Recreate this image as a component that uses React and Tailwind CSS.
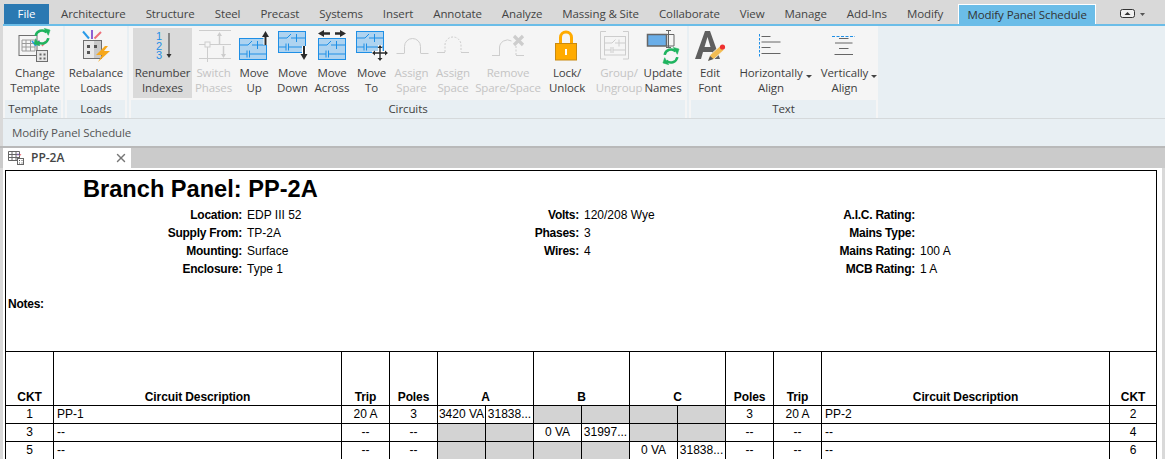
import { X } from "lucide-react";

const tabs = ["Architecture", "Structure", "Steel", "Precast", "Systems", "Insert", "Annotate", "Analyze", "Massing & Site", "Collaborate", "View", "Manage", "Add-Ins", "Modify"];

const BLUE = "#1e8fe6";
const DIS = "#cdcdcd";

function Icon({ children }) {
  return (
    <svg width="44" height="38" viewBox="0 0 44 38" fill="none" className="shrink-0">
      {children}
    </svg>
  );
}

function Refresh({ x, y }) {
  return (
    <g transform={`translate(${x} ${y}) scale(1.15)`} stroke="#1fb45f" strokeWidth="2.2" fill="none">
      <path d="M-5.5 -1a5.6 5.6 0 0 1 9.5 -3" />
      <path d="M5.5 1a5.6 5.6 0 0 1 -9.5 3" />
      <path d="M2 -7.5l5 1.5l-1.5 4.5z" fill="#1fb45f" strokeWidth="0.5" />
      <path d="M-2 7.5l-5 -1.5l1.5 -4.5z" fill="#1fb45f" strokeWidth="0.5" />
    </g>
  );
}

function Circuit({ x, y }) {
  return (
    <g transform={`translate(${x} ${y})`}>
      <rect x="0.5" y="0.5" width="27" height="21" fill="#aed3f0" stroke={BLUE} />
      <g stroke={BLUE}>
        <path d="M1 7h8l4 -4M13 7h14M18.5 3v8" />
        <path d="M1 16h7M8 12.5v7M10.5 12.5v7M10.5 16h16.5" />
      </g>
    </g>
  );
}

function Arrow({ d, head }) {
  return (
    <>
      <path d={d} stroke="#ffffff" strokeWidth="4" />
      <path d={d} stroke="#2b2b2b" strokeWidth="2" />
      <path d={head} fill="#2b2b2b" />
    </>
  );
}

const icons = {
  change: (
    <Icon>
      <rect x="6" y="7.5" width="18" height="20" fill="#f5f5f5" stroke="#6e6e6e" />
      <path d="M9 12h13v11H9zM9 15.500h13M9 19h13M13 12v11M17.500 12v11" stroke="#9a9a9a" />
      <path d="M19 13l4 5" stroke="#2a9be8" strokeWidth="1.600" />
      <path d="M26 12.500v5" stroke="#8d5fd3" strokeWidth="1.600" />
      <path d="M33 13l-4 5" stroke="#ee6f79" strokeWidth="1.600" />
      <Refresh x={29} y={9} />
      <rect x="23.500" y="22.500" width="11" height="11" fill="#e6e6e6" stroke="#6e6e6e" />
      <path d="M26.500 25.500h2v2h-2zM30.500 25.500h2v2h-2zM26.500 29.500h2v2h-2zM30.500 29.500h2v2h-2z" fill="#666666" />
    </Icon>
  ),
  rebalance: (
    <Icon>
      <path d="M9 3.500l6 7" stroke="#2a9be8" strokeWidth="2" />
      <path d="M18 2v9" stroke="#8d5fd3" strokeWidth="2" />
      <path d="M27 4l-6.500 6.500" stroke="#ee6f79" strokeWidth="2" />
      <rect x="9.500" y="12.500" width="18" height="18" fill="#e8e8e8" stroke="#6e6e6e" />
      <rect x="20" y="13" width="7" height="17" fill="#c9c9c9" />
      <path d="M13 17h3v3h-3zM13 23h3v3h-3zM20 17h3v3h-3z" fill="#555555" />
      <path d="M31 18l-9 9h6l-4 7l12 -11h-6l4 -5z" fill="#f7a81b" />
    </Icon>
  ),
  renumber: (
    <Icon>
      <text textAnchor="middle" fontSize="11" fill={BLUE} fontFamily="'Liberation Sans', sans-serif">
        <tspan x="18" y="12">1</tspan>
        <tspan x="18" y="21.500">2</tspan>
        <tspan x="18" y="31">3</tspan>
      </text>
      <path d="M28 5v22" stroke="#333333" />
      <path d="M25.500 26h5l-2.500 4z" fill="#333333" />
    </Icon>
  ),
  switch: (
    <Icon>
      <path d="M7 2.500h32M7 16.500h6M18 16.500h21M7 30.500h32M15.500 19v15" stroke={DIS} />
      <rect x="13" y="14" width="5" height="5" stroke={DIS} fill="#f5f5f5" />
      <path d="M27.500 6v10" stroke={DIS} strokeWidth="1.500" />
      <path d="M25 8l2.500 -4l2.500 4z" fill={DIS} />
      <path d="M31.500 18v10" stroke={DIS} strokeWidth="1.500" />
      <path d="M29 26l2.500 4l2.500 -4z" fill={DIS} />
    </Icon>
  ),
  up: (
    <Icon>
      <Circuit x={7} y={10} />
      <Arrow d="M33.500 8v9" head="M30 9l3.500 -6l3.500 6z" />
    </Icon>
  ),
  down: (
    <Icon>
      <Circuit x={7} y={3} />
      <Arrow d="M33 18v9" head="M29.500 26l3.500 6l3.500 -6z" />
    </Icon>
  ),
  across: (
    <Icon>
      <Circuit x={8} y={10} />
      <path d="M12 5.500h8M25 5.500h7" stroke="#2b2b2b" strokeWidth="2.400" />
      <path d="M14 2l-6 3.500l6 3.500z" fill="#2b2b2b" />
      <path d="M30 2l6 3.500l-6 3.500z" fill="#2b2b2b" />
    </Icon>
  ),
  to: (
    <Icon>
      <Circuit x={6} y={3} />
      <g transform="translate(30 25)">
        <path d="M0 -8v16M-8 0h16" stroke="#ffffff" strokeWidth="4" />
        <path d="M0 -6v12M-6 0h12" stroke="#2b2b2b" strokeWidth="1.400" />
        <path d="M-2.500 -5l2.500 -3l2.500 3zM-2.500 5l2.500 3l2.500 -3zM-5 -2.500l-3 2.500l3 2.500zM5 -2.500l3 2.500l-3 2.500z" fill="#2b2b2b" />
      </g>
    </Icon>
  ),
  spare: (
    <Icon>
      <path d="M6.500 25.500h8M30.500 25.500h8" stroke={DIS} />
      <path d="M14.500 25v-6.500a8 8 0 0 1 16 0V25" stroke={DIS} />
    </Icon>
  ),
  space: (
    <Icon>
      <path d="M6 24.500h8M30 24.500h8" stroke={DIS} />
      <path d="M14 24v-7a8 8 0 0 1 16 0V24" stroke={DIS} strokeDasharray="2 1.500" />
    </Icon>
  ),
  remove: (
    <Icon>
      <path d="M6 27.500h8M30 27.500h8" stroke={DIS} />
      <path d="M13.500 27v-7a8 8 0 0 1 12 -7" stroke={DIS} />
      <path d="M30 18v9" stroke={DIS} strokeDasharray="2 1.500" />
      <path d="M28 8l9 9M37 8l-9 9" stroke={DIS} strokeWidth="3.200" />
    </Icon>
  ),
  lock: (
    <Icon>
      <path d="M15.500 16V9.500a5.500 5.500 0 0 1 11 0V16" stroke="#ffab00" strokeWidth="3" />
      <rect x="10.500" y="15.500" width="21" height="16.500" fill="#ffab00" stroke="#c98a10" />
      <rect x="20" y="21" width="2" height="6" fill="#ffffff" />
    </Icon>
  ),
  group: (
    <Icon>
      <path d="M9 3.500H3.500v27.500H9M26 3.500h5.500v27.500H26" stroke={DIS} />
      <rect x="7.500" y="8.500" width="21" height="18.500" stroke={DIS} />
      <path d="M8 15h7l3.500 -3.500M18 15h10M22 11.500v7M8 22h6M14 19v6M16 19v6M16 22h12" stroke={DIS} />
    </Icon>
  ),
  update: (
    <Icon>
      <rect x="6.500" y="6.500" width="19" height="11.500" fill="#6aaee8" stroke="#666666" strokeWidth="1.500" />
      <path d="M25 6.500h8v11.500h-8M25 2.500h5M27.500 2.500v17M25 19.500h5" stroke="#666666" />
      <Refresh x={30} y={28} />
    </Icon>
  ),
  font: (
    <Icon>
      <path d="M7 31L17 3h5l10 28h-6l-2 -7H15l-2 7zM16.500 19h6L19.500 9z" fill="#5f5f5f" fillRule="evenodd" />
      <path d="M20 33l2 -6l10 -9l4 4l-10 9z" fill="#f2bc52" stroke="#f5f5f5" strokeWidth="0.800" />
      <path d="M20 33l2 -5l3.500 3z" fill="#555555" />
      <circle cx="34.500" cy="19" r="2.600" fill="#ee3030" />
    </Icon>
  ),
  horiz: (
    <Icon>
      <path d="M10.500 6v23" stroke={BLUE} strokeDasharray="2.500 1.500" />
      <path d="M12.500 8.500h9M12.500 14h19M12.500 19.500h9M12.500 25.500h19" stroke="#666666" />
    </Icon>
  ),
  vert: (
    <Icon>
      <path d="M9 8.500h23" stroke={BLUE} strokeDasharray="3 1.500" />
      <path d="M16 10.500h9.500M12 15h17.500M16 20.500h9.500M11.500 26.500h18.500" stroke="#666666" />
    </Icon>
  ),
};

function RibbonButton({ icon, lines, width, disabled, active, caret }) {
  return (
    <div className={`flex h-[70px] flex-col items-center ${width} ${active ? "bg-[#dadada]" : ""} ${disabled ? "text-[#c4c4c4]" : "text-[#3f3f3f]"}`}>
      <div className="h-[37px]">{icons[icon]}</div>
      {lines.map((line) => (
        <div key={line} className="relative whitespace-nowrap text-center text-[11.5px] leading-[15px] tracking-[-0.1px]">
          {line}
          {caret && line === lines[0] && (
            <span className="absolute right-[-9px] top-[10px] border-x-[3px] border-t-[3px] border-x-transparent border-t-[#444444]" />
          )}
        </div>
      ))}
    </div>
  );
}

function Panel({ title, className, children }) {
  return (
    <div className={`flex flex-col bg-[#f5f5f5] ${className}`}>
      <div className="flex h-[74px] pt-[2px]">{children}</div>
      <div className="mx-[2px] h-[18px] bg-[#e8eff3] text-center text-[11.5px] leading-[18px] tracking-[-0.1px] text-[#3f3f3f]">{title}</div>
    </div>
  );
}

const info = [
  ["Location:", "EDP III 52", "Volts:", "120/208 Wye", "A.I.C. Rating:", ""],
  ["Supply From:", "TP-2A", "Phases:", "3", "Mains Type:", ""],
  ["Mounting:", "Surface", "Wires:", "4", "Mains Rating:", "100 A"],
  ["Enclosure:", "Type 1", "", "", "MCB Rating:", "1 A"],
];

const cell = "h-[18px] overflow-hidden border-t border-r border-black p-0 pb-[1px] text-center align-middle leading-[15px] whitespace-nowrap";
const grey = `${cell} bg-[#d3d3d3]`;
const head = "border-t border-r border-black p-0 text-center align-bottom font-bold leading-[15px] tracking-[-0.1px] whitespace-nowrap";

function Row({ left, leftDesc, right, rightDesc, phase }) {
  const phases = [0, 1, 2].flatMap((p) => (p === phase.at ? [phase.va, phase.id] : [null, null]));
  return (
    <tr>
      <td className={cell}>{left}</td>
      <td className={`${cell} pl-[3px] text-left`}>{leftDesc}</td>
      <td className={cell}>{phase.trip}</td>
      <td className={cell}>{phase.poles}</td>
      {phases.map((v, i) =>
        v === null ? (
          <td key={i} className={grey} />
        ) : (
          <td key={i} className={cell}>
            {v}
          </td>
        )
      )}
      <td className={cell}>{phase.poles}</td>
      <td className={cell}>{phase.trip}</td>
      <td className={`${cell} pl-[3px] text-left`}>{rightDesc}</td>
      <td className={`${cell} border-r-0`}>{right}</td>
    </tr>
  );
}

export default function App() {
  return (
    <div className="h-[459px] w-[1165px] overflow-hidden bg-[#d9d9d9] font-['Open_Sans',sans-serif]">
      {/* tab strip */}
      <div className="flex h-[24px] items-end pl-[4px] text-[11.5px] tracking-[-0.1px] text-[#444444]">
        <div className="flex h-[20px] w-[45px] items-center justify-center bg-[#2b79b2] text-white">File</div>
        <div className="ml-[2px] flex">
          {tabs.map((t) => (
            <div key={t} className="flex h-[20px] items-center px-[10px] whitespace-nowrap">
              {t}
            </div>
          ))}
        </div>
        <div className="ml-[5px] flex h-[20px] w-[138px] items-center justify-center border-x border-t border-white bg-[#6bbde8] whitespace-nowrap text-[#333333]">
          Modify Panel Schedule
        </div>
        <svg width="26" height="10" viewBox="0 0 26 10" fill="none" className="mb-[5px] ml-[24px]">
          <rect x="0.500" y="0.500" width="14" height="8" rx="2" stroke="#333333" fill="#f0f0f0" />
          <path d="M4.500 6l3 -3l3 3z" fill="#333333" />
          <path d="M20 4h5l-2.500 3z" fill="#555555" />
        </svg>
      </div>

      {/* ribbon */}
      <div className="ml-[3px] h-[2px] bg-[#6bbde8]" />
      <div className="ml-[3px] flex h-[92px] gap-[2px] bg-[#e8eff3]">
        <Panel title="Template" className="w-[60px]">
          <div className="pl-[4px]">
            <RibbonButton icon="change" lines={["Change", "Template"]} width="w-[56px]" />
          </div>
        </Panel>
        <Panel title="Loads" className="w-[62px]">
          <RibbonButton icon="rebalance" lines={["Rebalance", "Loads"]} width="w-[62px]" />
        </Panel>
        <Panel title="Circuits" className="w-[558px]">
          <div className="flex pl-[4px]">
            <RibbonButton icon="renumber" lines={["Renumber", "Indexes"]} width="w-[59px]" active />
            <RibbonButton icon="switch" lines={["Switch", "Phases"]} width="w-[43px]" disabled />
            <RibbonButton icon="up" lines={["Move", "Up"]} width="w-[38px]" />
            <RibbonButton icon="down" lines={["Move", "Down"]} width="w-[39px]" />
            <RibbonButton icon="across" lines={["Move", "Across"]} width="w-[40px]" />
            <RibbonButton icon="to" lines={["Move", "To"]} width="w-[39px]" />
            <RibbonButton icon="spare" lines={["Assign", "Spare"]} width="w-[41px]" disabled />
            <RibbonButton icon="space" lines={["Assign", "Space"]} width="w-[42px]" disabled />
            <RibbonButton icon="remove" lines={["Remove", "Spare/Space"]} width="w-[68px]" disabled />
            <RibbonButton icon="lock" lines={["Lock/", "Unlock"]} width="w-[50px]" />
            <RibbonButton icon="group" lines={["Group/", "Ungroup"]} width="w-[54px]" disabled />
            <RibbonButton icon="update" lines={["Update", "Names"]} width="w-[34px]" />
          </div>
        </Panel>
        <Panel title="Text" className="w-[189px]">
          <RibbonButton icon="font" lines={["Edit", "Font"]} width="w-[42px]" />
          <RibbonButton icon="horiz" lines={["Horizontally", "Align"]} width="w-[80px]" caret />
          <RibbonButton icon="vert" lines={["Vertically", "Align"]} width="w-[67px]" caret />
        </Panel>
      </div>
      <div className="ml-[3px] h-[1px] bg-[#d5d9db]" />
      <div className="ml-[3px] flex h-[27px] items-center bg-[#e8eff3] pl-[9px] text-[11.5px] tracking-[-0.1px] text-[#555555]">Modify Panel Schedule</div>
      <div className="h-[2px] bg-[#b9b9b9]" />

      {/* document tab */}
      <div className="flex h-[20px] bg-[#cbcbcb] pl-[3px]">
        <div className="flex w-[128px] items-center bg-white pl-[5px] text-[12px] font-semibold text-[#444444]">
          <svg width="16" height="16" viewBox="0 0 16 16" fill="none" className="shrink-0">
            <path d="M0.500 1.500h11v9h-11zM0.500 4.500h11M0.500 7.500h11M4 1.500v9M8 1.500v9" stroke="#666666" />
            <path d="M10 3.500v2" stroke="#8d5fd3" />
            <path d="M13 4l-1.500 2" stroke="#ee6f79" />
            <rect x="9.500" y="8.500" width="6" height="6" fill="#ffffff" stroke="#666666" />
            <path d="M11 10h1v1h-1zM13.500 10h1v1h-1zM11 12.500h1v1h-1zM13.500 12.500h1v1h-1z" fill="#555555" />
          </svg>
          <span className="ml-[7px]">PP-2A</span>
          <X size={14} strokeWidth={2.4} className="ml-[50px] text-[#777777]" />
        </div>
      </div>

      {/* schedule sheet */}
      <div className="mx-[3px] h-[291px] overflow-hidden bg-white pt-[2px] pl-[2px] font-['Liberation_Sans',sans-serif] text-[12px] leading-[18px] text-black">
        <div className="w-[1152px] border-x border-t border-black">
          <div className="h-[180px]">
            <div className="h-[35px] pl-[77px] text-[23.6px] leading-[36px] font-bold">Branch Panel: PP-2A</div>
            <div className="grid grid-cols-[236px_105px_232px_105px_231px_1fr]">
              {info.map((row) =>
                row.map((text, i) =>
                  i % 2 === 0 ? (
                    <div key={`${row[0]}-${i}`} className="h-[18px] text-right font-bold tracking-[-0.25px]">
                      {text}
                    </div>
                  ) : (
                    <div key={`${row[0]}-${i}`} className="h-[18px] pl-[5px]">
                      {text}
                    </div>
                  )
                )
              )}
            </div>
            <div className="mt-[17px] pl-[2px] font-bold tracking-[-0.25px]">Notes:</div>
          </div>
          <table className="w-[1150px] table-fixed border-separate border-spacing-0">
            <colgroup>
              <col className="w-[48px]" />
              <col className="w-[288px]" />
              <col className="w-[48px]" />
              <col className="w-[48px]" />
              <col className="w-[48px]" />
              <col className="w-[48px]" />
              <col className="w-[48px]" />
              <col className="w-[48px]" />
              <col className="w-[48px]" />
              <col className="w-[48px]" />
              <col className="w-[48px]" />
              <col className="w-[48px]" />
              <col className="w-[288px]" />
              <col className="w-[46px]" />
            </colgroup>
            <thead>
              <tr className="h-[54px]">
                <th className={head}>CKT</th>
                <th className={head}>Circuit Description</th>
                <th className={head}>Trip</th>
                <th className={head}>Poles</th>
                <th className={head} colSpan={2}>A</th>
                <th className={head} colSpan={2}>B</th>
                <th className={head} colSpan={2}>C</th>
                <th className={head}>Poles</th>
                <th className={head}>Trip</th>
                <th className={head}>Circuit Description</th>
                <th className={`${head} border-r-0`}>CKT</th>
              </tr>
            </thead>
            <tbody>
              <Row left="1" leftDesc="PP-1" right="2" rightDesc="PP-2" phase={{ at: 0, va: "3420 VA", id: "31838...", trip: "20 A", poles: "3" }} />
              <Row left="3" leftDesc="--" right="4" rightDesc="--" phase={{ at: 1, va: "0 VA", id: "31997...", trip: "--", poles: "--" }} />
              <Row left="5" leftDesc="--" right="6" rightDesc="--" phase={{ at: 2, va: "0 VA", id: "31838...", trip: "--", poles: "--" }} />
            </tbody>
          </table>
        </div>
      </div>
    </div>
  );
}
